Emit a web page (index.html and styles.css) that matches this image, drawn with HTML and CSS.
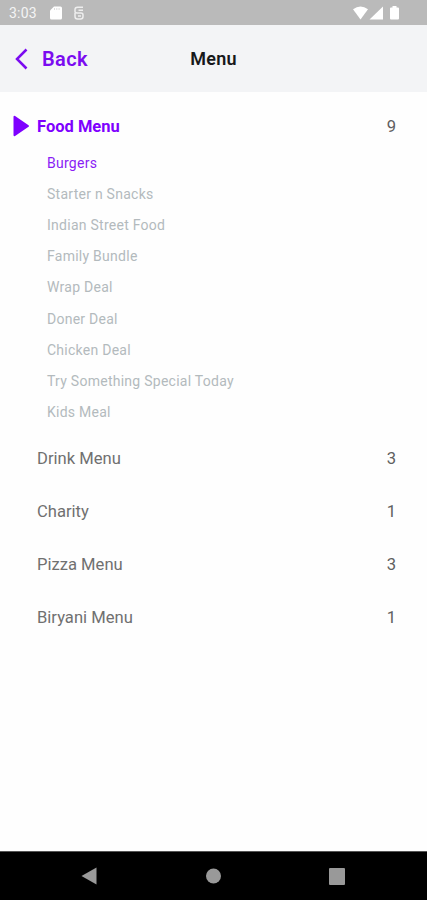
FILE: index.html
```html
<!DOCTYPE html>
<html lang="en">
<head>
    <meta charset="UTF-8">
    <meta name="viewport" content="width=device-width, initial-scale=1.0">
    <title>Menu</title>
    <link rel="stylesheet" href="styles.css">
</head>

<body>
    <!-- status bar -->
    <div class="status">
        <span class="time">3:03</span>
        <svg class="sd" width="12" height="14" viewBox="0 0 12 14"><path d="M4 0.5h6.500q1.500 0 1.500 1.500v10q0 1.500-1.500 1.500h-9q-1.500 0-1.500-1.500v-7.500z" fill="#fff"/><path d="M4.500 2v2M6.800 2v2M9.100 2v2" stroke="#ddd" stroke-width="1"/></svg>
        <svg class="sync" width="10" height="14" viewBox="0 0 10 14" fill="none" stroke="#eee" stroke-width="1.500"><path d="M9 1.200H3.500Q1 1.200 1 3.500v2q0 1.500 2 1.500h4q2 0 2 2v1.500q0 2.500-2.500 2.500h-3Q1 13 1 10.500V7M9 4.200H4.500M4 10h3"/></svg>
        <svg class="signals" width="46" height="14" viewBox="0 0 46 14" fill="#fff"><path d="M0 3.200Q7.500-2.400 15 3.200L7.500 13.500z"/><path d="M30 0.500v13H16.500z"/><path d="M39.500 0h4v1.500h1.500q1 0 1 1v10q0 1-1 1h-7q-1 0-1-1v-10q0-1 1-1h1.500z"/></svg>
    </div>

    <header>
        <a class="back">
            <svg width="14" height="22" viewBox="0 0 14 22"><path d="M11.500 1.500L2 11l9.500 9.500" fill="none" stroke="#7b0bf0" stroke-width="2.500"/></svg>
            <span>Back</span>
        </a>
        <h1>Menu</h1>
    </header>

    <main>
        <div class="row open">
            <svg class="arrow" width="17" height="22" viewBox="0 0 17 22"><path d="M1.500 1.800L15 11L1.500 20.200z" fill="#7f00ff" stroke="#7f00ff" stroke-width="2" stroke-linejoin="round"/></svg>
            <span class="name">Food Menu</span>
            <span class="count">9</span>
        </div>
        <ul>
            <li class="active"><span>Burgers</span></li>
            <li><span>Starter n Snacks</span></li>
            <li><span>Indian Street Food</span></li>
            <li><span>Family Bundle</span></li>
            <li><span>Wrap Deal</span></li>
            <li><span>Doner Deal</span></li>
            <li><span>Chicken Deal</span></li>
            <li><span>Try Something Special Today</span></li>
            <li><span>Kids Meal</span></li>
        </ul>
        <div class="row"><span class="name">Drink Menu</span><span class="count">3</span></div>
        <div class="row"><span class="name">Charity</span><span class="count">1</span></div>
        <div class="row"><span class="name">Pizza Menu</span><span class="count">3</span></div>
        <div class="row"><span class="name">Biryani Menu</span><span class="count">1</span></div>
    </main>

    <!-- android navigation -->
    <nav>
        <svg width="16" height="18" viewBox="0 0 16 18"><path d="M15.500 0.500v17L0.500 9z" fill="#999"/></svg>
        <svg width="16" height="16" viewBox="0 0 16 16"><circle cx="8.500" cy="8" r="7.500" fill="#999"/></svg>
        <svg width="16" height="17" viewBox="0 0 16 17"><rect width="16" height="17" rx="1" fill="#999"/></svg>
    </nav>
</body>

</html>
```

FILE: styles.css
```css
* {
    box-sizing: border-box;
}
body {
    margin: 0;
    height: 900px;
    display: flex;
    flex-direction: column;
    font-family: Roboto, "Liberation Sans", sans-serif;
    background-color: #fefefe;
    overflow: hidden;
}
svg {
    display: block;
    flex: none;
}
.status {
    height: 25px;
    padding: 1px 28px 0 9px;
    display: flex;
    align-items: center;
    background-color: #bababa;
    color: #f4f4f4;
    font-size: 14px;
    letter-spacing: 0.2px;
}
.time {
    width: 41px;
}
.sync {
    margin-left: 12px;
}
.signals {
    margin-left: auto;
}
header {
    height: 67px;
    padding: 0 15px;
    display: grid;
    grid-template-columns: 1fr auto 1fr;
    align-items: center;
    background-color: #f3f4f6;
}
.back {
    display: flex;
    align-items: center;
    gap: 13px;
    color: #7b0bf0;
    font-size: 20px;
    font-weight: 600;
    letter-spacing: 0.4px;
}
h1 {
    margin: 0;
    font-size: 18px;
    font-weight: 600;
    letter-spacing: 0.3px;
    color: #17181a;
}
main {
    flex: 1;
    padding-top: 8px;
}
.row {
    height: 52.800px;
    padding: 0 31px 0 37px;
    display: flex;
    align-items: center;
    justify-content: space-between;
    font-size: 16.600px;
    color: #707070;
}
.open {
    padding-left: 13px;
}
.open .name {
    margin-left: 7px;
    margin-right: auto;
    color: #7f00ff;
    font-size: 16.500px;
    font-weight: 700;
}
.count {
    color: #606060;
}
/* sub categories */
ul {
    list-style: none;
    margin: -5.300px 0 5px;
    padding: 0 0 0 47px;
}
li {
    height: 31.100px;
    display: flex;
    align-items: center;
    font-size: 14px;
    letter-spacing: 0.260px;
    color: #b3babd;
}
.active {
    color: #8a1cf5;
}
nav {
    height: 49px;
    padding: 0 82px 0 81px;
    display: flex;
    align-items: center;
    justify-content: space-between;
    background-color: #000;
    border-top: 1px solid #555;
}
```
